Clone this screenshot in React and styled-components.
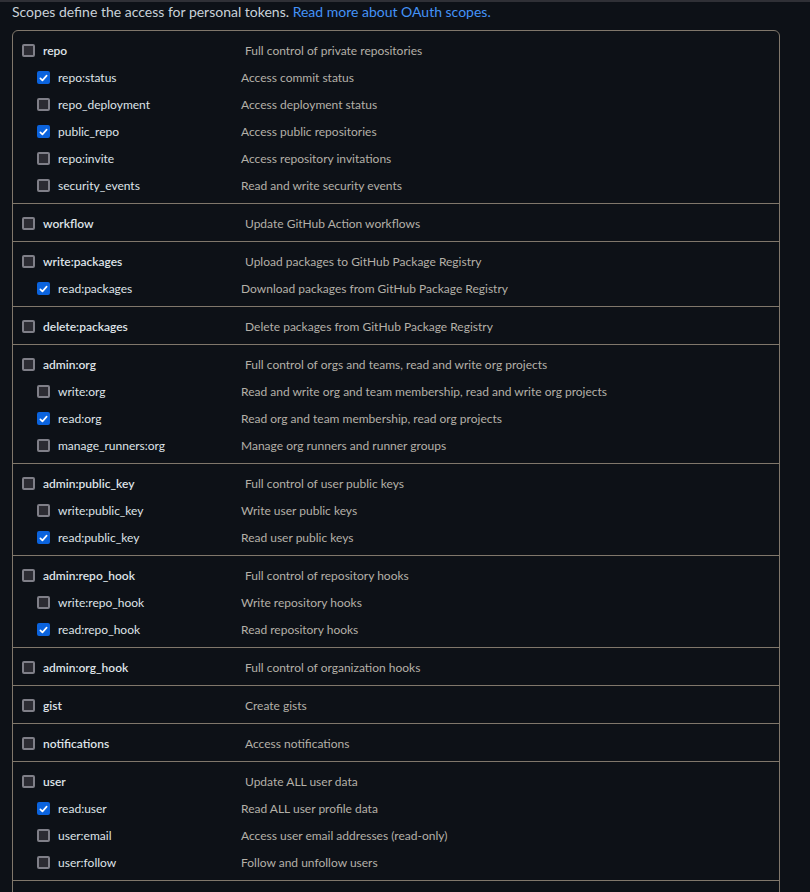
import React from 'react';
import styled, {createGlobalStyle} from 'styled-components';

const scopes = [
  {
    name: 'repo',
    desc: 'Full control of private repositories',
    children: [
      {name: 'repo:status', desc: 'Access commit status', checked: true},
      {name: 'repo_deployment', desc: 'Access deployment status'},
      {name: 'public_repo', desc: 'Access public repositories', checked: true},
      {name: 'repo:invite', desc: 'Access repository invitations'},
      {name: 'security_events', desc: 'Read and write security events'},
    ],
  },
  {name: 'workflow', desc: 'Update GitHub Action workflows'},
  {
    name: 'write:packages',
    desc: 'Upload packages to GitHub Package Registry',
    children: [
      {name: 'read:packages', desc: 'Download packages from GitHub Package Registry', checked: true},
    ],
  },
  {name: 'delete:packages', desc: 'Delete packages from GitHub Package Registry'},
  {
    name: 'admin:org',
    desc: 'Full control of orgs and teams, read and write org projects',
    children: [
      {name: 'write:org', desc: 'Read and write org and team membership, read and write org projects'},
      {name: 'read:org', desc: 'Read org and team membership, read org projects', checked: true},
      {name: 'manage_runners:org', desc: 'Manage org runners and runner groups'},
    ],
  },
  {
    name: 'admin:public_key',
    desc: 'Full control of user public keys',
    children: [
      {name: 'write:public_key', desc: 'Write user public keys'},
      {name: 'read:public_key', desc: 'Read user public keys', checked: true},
    ],
  },
  {
    name: 'admin:repo_hook',
    desc: 'Full control of repository hooks',
    children: [
      {name: 'write:repo_hook', desc: 'Write repository hooks'},
      {name: 'read:repo_hook', desc: 'Read repository hooks', checked: true},
    ],
  },
  {name: 'admin:org_hook', desc: 'Full control of organization hooks'},
  {name: 'gist', desc: 'Create gists'},
  {name: 'notifications', desc: 'Access notifications'},
  {
    name: 'user',
    desc: 'Update ALL user data',
    children: [
      {name: 'read:user', desc: 'Read ALL user profile data', checked: true},
      {name: 'user:email', desc: 'Access user email addresses (read-only)'},
      {name: 'user:follow', desc: 'Follow and unfollow users'},
    ],
  },
];

const Check = ({checked}) => (
  <Box checked={checked}>
    {checked && (
      <svg width="10" height="10" viewBox="0 0 12 12">
        <path d="M1.8 6.4 L4.6 9.2 L10.2 2.8" fill="none" stroke="#fff" strokeWidth="2.2" strokeLinecap="round" strokeLinejoin="round" />
      </svg>
    )}
  </Box>
);

const Row = ({scope, child}) => (
  <RowWrap child={child}>
    <Name child={child}>
      <Check checked={scope.checked} />
      <Label child={child}>{scope.name}</Label>
    </Name>
    <Desc>{scope.desc}</Desc>
  </RowWrap>
);

const App = () => (
  <>
    <GlobalStyle />
    <TopBar />
    <Page>
      <Intro>
        Scopes define the access for personal tokens. <Link>Read more about OAuth scopes.</Link>
      </Intro>
      <Panel>
        {scopes.map(s => (
          <Section key={s.name}>
            <Row scope={s} />
            {(s.children || []).map(c => (
              <Row key={c.name} scope={c} child />
            ))}
          </Section>
        ))}
        <Tail />
      </Panel>
    </Page>
  </>
);

export default App;

const GlobalStyle = createGlobalStyle`
  html, body {
    margin: 0;
    background: #0d1117;
  }
  body {
    font-family: "Segoe UI", Lato, "Noto Sans", sans-serif;
    color: #c9d1d9;
    height: 892px;
    overflow: hidden;
  }
`;

const TopBar = styled.div`
  height: 2px;
  background: #2f3036;
`;

const Page = styled.div`
  padding: 0 30px 0 12px;
`;

const Intro = styled.p`
  margin: 0;
  padding-top: 1px;
  font-size: 14px;
  line-height: 17px;
  color: #c9d1d9;
`;

const Link = styled.a`
  color: #4493f8;
  cursor: pointer;
`;

const Panel = styled.div`
  margin-top: 10px;
  border: 1px solid #80776b;
  border-radius: 6px;
  width: 766px;
`;

const Section = styled.div`
  padding: 6px 0 4px;
  & + & {
    border-top: 1px solid #80776b;
  }
`;

const Tail = styled.div`
  height: 40px;
  border-top: 1px solid #80776b;
`;

const RowWrap = styled.div`
  display: flex;
  align-items: center;
  height: 27px;
  padding-left: ${p => (p.child ? '24px' : '9px')};
  font-size: 12px;
`;

const Name = styled.div`
  display: flex;
  align-items: center;
  gap: 8px;
  width: ${p => (p.child ? '204px' : '223px')};
  flex-shrink: 0;
`;

const Box = styled.span`
  box-sizing: border-box;
  width: 13px;
  height: 13px;
  border-radius: 2px;
  display: inline-flex;
  align-items: center;
  justify-content: center;
  background: ${p => (p.checked ? '#0b63dd' : '#2c2c33')};
  border: 2px solid ${p => (p.checked ? '#0b63dd' : '#7f7f88')};
`;

const Label = styled.span`
  color: #dfe3e8;
  font-weight: ${p => (p.child ? 400 : 600)};
`;

const Desc = styled.span`
  color: #b4b0a8;
`;
